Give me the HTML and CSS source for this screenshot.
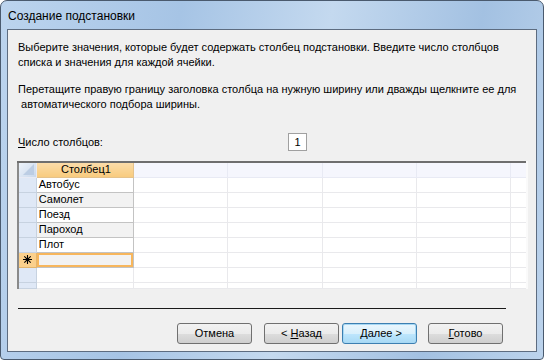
FILE: index.html
```html
<!DOCTYPE html>
<html lang="ru">
<head>
    <meta charset="UTF-8">
    <title>Создание подстановки</title>
    <link rel="stylesheet" href="styles.css">
</head>
<body>
    <div class="window">
        <div class="title">Создание подстановки</div>
        <div class="client">
            <p class="hint">Выберите значения, которые будет содержать столбец подстановки. Введите число столбцов<br>списка и значения для каждой ячейки.</p>
            <p class="hint">Перетащите правую границу заголовка столбца на нужную ширину или дважды щелкните ее для<br>&nbsp;автоматического подбора ширины.</p>
            <div class="count-row">
                <span class="count-label"><u>Ч</u>исло столбцов:</span>
                <span class="count-box">1</span>
            </div>
            <table class="grid">
                <tr class="head">
                    <td class="sel corner"><span class="tri"></span></td>
                    <td class="col1 active">Столбец1</td>
                    <td></td><td></td><td></td><td></td><td class="last"></td>
                </tr>
                <tr><td class="sel"></td><td class="col1">Автобус</td><td></td><td></td><td></td><td></td><td class="last"></td></tr>
                <tr class="alt"><td class="sel"></td><td class="col1">Самолет</td><td></td><td></td><td></td><td></td><td class="last"></td></tr>
                <tr><td class="sel"></td><td class="col1">Поезд</td><td></td><td></td><td></td><td></td><td class="last"></td></tr>
                <tr class="alt"><td class="sel"></td><td class="col1">Пароход</td><td></td><td></td><td></td><td></td><td class="last"></td></tr>
                <tr><td class="sel"></td><td class="col1">Плот</td><td></td><td></td><td></td><td></td><td class="last"></td></tr>
                <tr class="alt newrow">
                    <td class="sel star">
                        <svg width="9" height="9" viewBox="0 0 9 9"><path d="M4.5 0v9M0 4.5h9M1.3 1.3l6.4 6.4M7.7 1.3l-6.4 6.4" stroke="#000" stroke-width="1.1" fill="none"/></svg>
                    </td>
                    <td class="col1 current"></td><td></td><td></td><td></td><td></td><td class="last"></td>
                </tr>
                <tr><td class="sel blank"></td><td></td><td></td><td></td><td></td><td></td><td class="last"></td></tr>
                <tr class="cut"><td class="sel blank"></td><td></td><td></td><td></td><td></td><td></td><td class="last"></td></tr>
            </table>
            <div class="rule"></div>
            <div class="buttons">
                <button class="btn">Отмена</button>
                <button class="btn gap-s">&lt; <u>Н</u>азад</button>
                <button class="btn default">&nbsp;<u>Д</u>алее &gt;</button>
                <button class="btn gap-l"><u>Г</u>отово</button>
            </div>
        </div>
    </div>
</body>
</html>
```

FILE: styles.css
```css
:root {
    --client: #f0f0f0;
    --line: #c3c3c3;
    --faint: #e9e9ec;
    --orange: #f7b65c;
}

body {
    margin: 0;
    width: 544px;
    height: 360px;
    overflow: hidden;
    font-family: Tahoma, "Liberation Sans", "DejaVu Sans", sans-serif;
    font-size: 11px;
    color: #000;
    background: #fff;
}

.window {
    box-sizing: border-box;
    width: 544px;
    height: 360px;
    border: 1px solid #4a5a6e;
    border-radius: 7px 7px 4px 4px;
    background: linear-gradient(100deg, #bcd4ee 0%, #a6c4e5 30%, #c4d9ef 55%, #a3c1e2 80%, #bcd3ec 100%);
    padding: 0 6px 7px 6px;
    display: flex;
    flex-direction: column;
}

.title {
    height: 28px;
    line-height: 30px;
    padding-left: 1px;
    font-size: 12px;
    color: #000;
}

.client {
    flex: 1;
    min-height: 0;
    overflow: hidden;
    background: var(--client);
    border: 1px solid #5d6c80;
    padding: 10px 9px 0 10px;
    display: flex;
    flex-direction: column;
}

.hint {
    margin: 0 0 12px 0;
    line-height: 15px;
    white-space: nowrap;
}

.count-row {
    display: flex;
    align-items: center;
    height: 18px;
    margin-top: 9px;
}

.count-label {
    width: 270px;
}

.count-box {
    box-sizing: border-box;
    width: 19px;
    height: 18px;
    background: #fff;
    border: 1px solid #a0a0a0;
    text-align: center;
    line-height: 16px;
}

.grid {
    margin-top: 10px;
    margin-left: -1px;
    width: 511px;
    border-collapse: collapse;
    table-layout: fixed;
    background: #fff;
    border-top: 2px solid #6e6e6e;
    border-left: 2px solid #8a8a8a;
    border-right: 2px solid #fafafa;
    border-bottom: 1px solid #fafafa;
}

.grid td {
    box-sizing: border-box;
    height: 15px;
    padding: 0 0 0 2px;
    border: 1px solid var(--faint);
    width: 93px;
    white-space: nowrap;
    line-height: 13px;
    overflow: hidden;
}

.grid td.sel {
    width: 18px;
    padding: 0;
    background: #dfe8f6;
    border-color: #c7d2e0;
}

.grid td.last {
    width: 16px;
}

.grid td.col1 {
    width: 96px;
    border-color: var(--line);
}

.grid tr.alt td.col1 {
    background: #f2f2f2;
}

.grid .head td {
    background: #f5f6fd;
    border-color: #e8eaf4;
    text-align: center;
}

.grid .head td.active {
    background: linear-gradient(#fbdca9, #f8cb7e);
    border-color: #e5c28b;
}

.grid .head td.corner {
    background: linear-gradient(135deg, #eef3fa 0%, #c9d8ec 100%);
    position: relative;
}

.tri {
    position: absolute;
    right: 2px;
    bottom: 2px;
    width: 0;
    height: 0;
    border-left: 11px solid transparent;
    border-bottom: 11px solid #bccde4;
}

.grid td.star {
    background: #fbd08c;
    text-align: center;
    border-color: #e3b56d;
}

.star svg {
    display: block;
    margin: 0 auto;
}

.grid td.current {
    box-shadow: inset 0 0 0 2px var(--orange);
}

.grid tr.cut td {
    height: 6px;
    line-height: 4px;
}

.rule {
    margin-top: 19px;
    width: 488px;
    border-top: 1px solid #1a1a1a;
}

.buttons {
    display: flex;
    margin-top: 14px;
    padding-left: 159px;
}

.btn {
    box-sizing: border-box;
    width: 75px;
    height: 21px;
    font-family: inherit;
    font-size: 11px;
    color: #000;
    border: 1px solid #707070;
    border-radius: 3px;
    background: linear-gradient(#f2f2f2 0%, #ebebeb 50%, #dddddd 51%, #cfcfcf 100%);
    padding: 0;
}

.gap-s {
    margin-left: 12px;
}

.btn.default {
    margin-left: 3px;
    border-color: #3c7fb1;
    box-shadow: inset 0 0 0 1px #a7d8f4;
    background: linear-gradient(#eaf6fd 0%, #d9f0fc 50%, #bee6fd 51%, #a7d9f5 100%);
}

.gap-l {
    margin-left: 11px;
}
```
